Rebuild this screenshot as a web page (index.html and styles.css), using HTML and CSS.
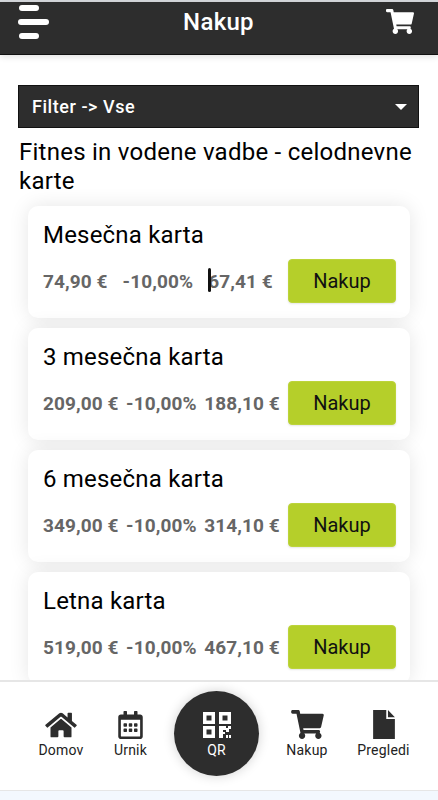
FILE: index.html
```html
<!DOCTYPE html>
<html lang="sl">
<head>
<meta charset="utf-8">
<title>Nakup</title>
<link rel="stylesheet" href="styles.css">
</head>
<body>
<div class="app">
  <header class="topbar">
    <div class="burger"><span class="bar"></span><span class="bar bar-long"></span><span class="bar"></span></div>
    <h1 class="topbar-title">Nakup</h1>
    <svg class="topbar-cart" viewBox="0 0 576 512"><use href="#cart"/></svg>
  </header>
  <main class="content">
    <div class="filter"><span>Filter -&gt; Vse</span><span class="caret"></span></div>
    <h2 class="section-title">Fitnes in vodene vadbe - celodnevne karte</h2>
    <div class="cards">
      <article class="card">
        <h3 class="card-title">Mesečna karta</h3>
        <div class="card-row">
          <div class="prices prices-wide"><span>74,90 €</span><span>-10,00%</span><span class="final">67,41 €<i class="text-cursor"></i></span></div>
          <button class="buy">Nakup</button>
        </div>
      </article>
      <article class="card">
        <h3 class="card-title">3 mesečna karta</h3>
        <div class="card-row">
          <div class="prices"><span>209,00 €</span><span>-10,00%</span><span>188,10 €</span></div>
          <button class="buy">Nakup</button>
        </div>
      </article>
      <article class="card">
        <h3 class="card-title">6 mesečna karta</h3>
        <div class="card-row">
          <div class="prices"><span>349,00 €</span><span>-10,00%</span><span>314,10 €</span></div>
          <button class="buy">Nakup</button>
        </div>
      </article>
      <article class="card">
        <h3 class="card-title">Letna karta</h3>
        <div class="card-row">
          <div class="prices"><span>519,00 €</span><span>-10,00%</span><span>467,10 €</span></div>
          <button class="buy">Nakup</button>
        </div>
      </article>
    </div>
  </main>
  <nav class="tabbar">
    <a class="tab tab-home">
      <svg class="ico ico-home" viewBox="0 0 576 512"><path d="M280.37 148.26L96 300.11V464a16 16 0 0 0 16 16l112.06-.29a16 16 0 0 0 15.92-16V368a16 16 0 0 1 16-16h64a16 16 0 0 1 16 16v95.64a16 16 0 0 0 16 16.05L464 480a16 16 0 0 0 16-16V300L295.67 148.26a12.19 12.19 0 0 0-15.3 0zM571.6 251.47L488 182.56V44.05a12 12 0 0 0-12-12h-56a12 12 0 0 0-12 12v72.61L318.47 43a48 48 0 0 0-61 0L4.34 251.47a12 12 0 0 0-1.6 16.9l25.5 31A12 12 0 0 0 45.15 301l235.22-193.74a12.19 12.19 0 0 1 15.3 0L530.9 301a12 12 0 0 0 16.9-1.6l25.5-31a12 12 0 0 0-1.7-16.93z"/></svg>
      <span>Domov</span>
    </a>
    <a class="tab tab-urnik">
      <svg class="ico ico-cal" viewBox="0 0 448 512"><path d="M148 288h-40c-6.6 0-12-5.4-12-12v-40c0-6.6 5.4-12 12-12h40c6.6 0 12 5.4 12 12v40c0 6.6-5.4 12-12 12zm108-12v-40c0-6.6-5.4-12-12-12h-40c-6.6 0-12 5.4-12 12v40c0 6.6 5.4 12 12 12h40c6.6 0 12-5.4 12-12zm96 0v-40c0-6.6-5.4-12-12-12h-40c-6.6 0-12 5.4-12 12v40c0 6.6 5.4 12 12 12h40c6.6 0 12-5.4 12-12zm-96 96v-40c0-6.6-5.4-12-12-12h-40c-6.6 0-12 5.4-12 12v40c0 6.6 5.4 12 12 12h40c6.6 0 12-5.4 12-12zm-96 0v-40c0-6.6-5.4-12-12-12h-40c-6.6 0-12 5.4-12 12v40c0 6.6 5.4 12 12 12h40c6.6 0 12-5.4 12-12zm192 0v-40c0-6.6-5.4-12-12-12h-40c-6.6 0-12 5.4-12 12v40c0 6.6 5.4 12 12 12h40c6.6 0 12-5.4 12-12zm96-260v352c0 26.5-21.5 48-48 48H48c-26.5 0-48-21.5-48-48V112c0-26.5 21.5-48 48-48h48V12c0-6.6 5.4-12 12-12h40c6.6 0 12 5.4 12 12v52h128V12c0-6.6 5.4-12 12-12h40c6.6 0 12 5.4 12 12v52h48c26.5 0 48 21.5 48 48zm-48 346V160H48v298c0 3.3 2.7 6 6 6h340c3.3 0 6-2.7 6-6z"/></svg>
      <span>Urnik</span>
    </a>
    <a class="qr">
      <svg class="ico-qr" viewBox="0 0 28 26"><path fill-rule="evenodd" d="M0 0h12v12H0zM3.500 3.500v5h5v-5zM16 0h12v12H16zM19.500 3.500v5h5v-5zM0 14h12v12H0zM3.500 17.500v5h5v-5z"/><path d="M16 14h4v12h-4zM20 14h3v4h-3zM23 16h3v4h-3zM25 14h3v3h-3zM20 20h2v2h-2zM23 23h2v3h-2zM26 23h2v3h-2z"/></svg>
      <span>QR</span>
    </a>
    <a class="tab tab-cart">
      <svg class="ico ico-cart" viewBox="0 0 576 512"><use href="#cart"/></svg>
      <span>Nakup</span>
    </a>
    <a class="tab tab-file">
      <svg class="ico ico-file" viewBox="0 0 384 512"><path d="M0 0h232v160h152v352H0zM262 0l122 128H262z"/></svg>
      <span>Pregledi</span>
    </a>
  </nav>
  <div class="footer-strip"></div>
</div>
<svg class="defs" width="0" height="0"><defs><path id="cart" d="M528.12 301.319l47.273-208C578.806 78.301 567.391 64 551.99 64H159.208l-9.166-44.81C147.758 8.021 137.93 0 126.529 0H24C10.745 0 0 10.745 0 24v16c0 13.255 10.745 24 24 24h69.883l70.248 343.435C147.325 417.1 136 435.222 136 456c0 30.928 25.072 56 56 56s56-25.072 56-56c0-15.674-6.447-29.835-16.824-40h209.647C430.447 426.165 424 440.326 424 456c0 30.928 25.072 56 56 56s56-25.072 56-56c0-22.172-12.888-41.332-31.579-50.405l5.517-24.276c3.413-15.018-8.002-29.319-23.403-29.319H218.117l-6.545-32h293.145c11.206 0 20.92-7.754 23.403-18.681z"/></defs></svg>
</body>
</html>
```
FILE: styles.css
```css
* { box-sizing: border-box; }
html, body { margin: 0; height: 100%; }
body { font-family: Roboto, "Liberation Sans", sans-serif; background: #fff; color: #000; overflow: hidden; }
.defs { display: block; height: 0; }
.app { height: 800px; display: flex; flex-direction: column; border-top: 2px solid #d5d8dc; }

.topbar { flex: none; height: 53px; background: #2d2d2d; border-bottom: 1px solid #111; box-shadow: 0 2px 6px rgba(0,0,0,.12); display: flex; align-items: flex-start; justify-content: space-between; padding: 3px 24px 0 18px; position: relative; z-index: 1; }
.burger { width: 31px; display: flex; flex-direction: column; align-items: flex-start; gap: 8px; }
.bar { display: block; width: 20px; height: 6px; margin-left: 1px; background: #fff; border-radius: 3px; }
.bar-long { width: 31px; margin-left: 0; }
.topbar-title { margin: 1px 0 0 2px; font-size: 24px; line-height: 32px; font-weight: 500; letter-spacing: .3px; color: #fff; }
.topbar-cart { width: 28px; height: 25px; margin-top: 4px; fill: #fff; }

.content { flex: 1; min-height: 0; overflow: hidden; padding: 30px 19px 0 18px; }
.filter { height: 43px; background: #2d2d2d; border: 1px solid #111; color: #fff; font-size: 18px; font-weight: 500; letter-spacing: .55px; display: flex; align-items: center; justify-content: space-between; padding: 0 11px 0 13px; }
.caret { width: 0; height: 0; border-left: 6px solid transparent; border-right: 6px solid transparent; border-top: 6px solid #fff; }
.section-title { margin: 10px 0 0 1px; font-size: 24px; line-height: 29px; font-weight: 400; letter-spacing: .25px; }

.cards { display: flex; flex-direction: column; gap: 10px; margin: 10px 9px 0 10px; }
.card { flex: none; height: 112px; background: #fff; border-radius: 10px; box-shadow: 0 0 20px rgba(0,0,0,.1); padding: 14px 14px 0 15px; }
.card-title { margin: 0; font-size: 24px; line-height: 30px; font-weight: 400; letter-spacing: .2px; }
.card-row { display: flex; align-items: center; justify-content: space-between; margin-top: 9px; }
.prices { display: flex; gap: 7.500px; font-size: 19px; font-weight: 700; color: #666; white-space: nowrap; letter-spacing: .1px; }
.prices-wide { gap: 15px; }
.final { position: relative; }
.text-cursor { position: absolute; left: 0; top: -2px; width: 3px; height: 24px; border-radius: 2px; background: #111; }
.buy { width: 108px; height: 44px; border: 1px solid #bcd43a; border-radius: 4px; background: #b5cf2a; color: #111; font: 400 20px Roboto, sans-serif; padding: 0; box-shadow: 0 1px 2px rgba(0,0,0,.1); }

.tabbar { flex: none; height: 111px; background: #fff; border-top: 2px solid #e6e6e6; border-bottom: 1px solid #e6e6e6; display: flex; align-items: flex-start; padding-left: 38px; position: relative; z-index: 2; }
.tab { display: flex; flex-direction: column; align-items: center; color: #222; font-size: 14px; line-height: 18px; letter-spacing: .2px; height: 77px; justify-content: flex-end; }
.tab-home { width: 46px; }
.tab-urnik { width: 33px; margin-left: 30px; }
.tab-cart { width: 42px; margin-left: 27px; }
.tab-file { width: 53px; margin-left: 29px; }
.ico { fill: #2d2d2d; margin-bottom: 2px; flex: none; }
.ico-home { width: 32px; height: 28px; }
.ico-cal { width: 25px; height: 28px; }
.ico-cart { width: 33px; height: 29px; }
.ico-file { width: 22px; height: 29px; }
.qr { flex: none; width: 85px; height: 85px; margin: 9px 0 0 27px; border-radius: 50%; background: #2d2d2d; color: #fff; font-size: 14px; line-height: 18px; box-shadow: 0 0 12px rgba(0,0,0,.18); display: flex; flex-direction: column; align-items: center; padding-top: 21px; }
.ico-qr { width: 28px; height: 26px; fill: #fff; margin-bottom: 3px; }

.footer-strip { flex: none; height: 9px; background: #f3f8fe; }
```
